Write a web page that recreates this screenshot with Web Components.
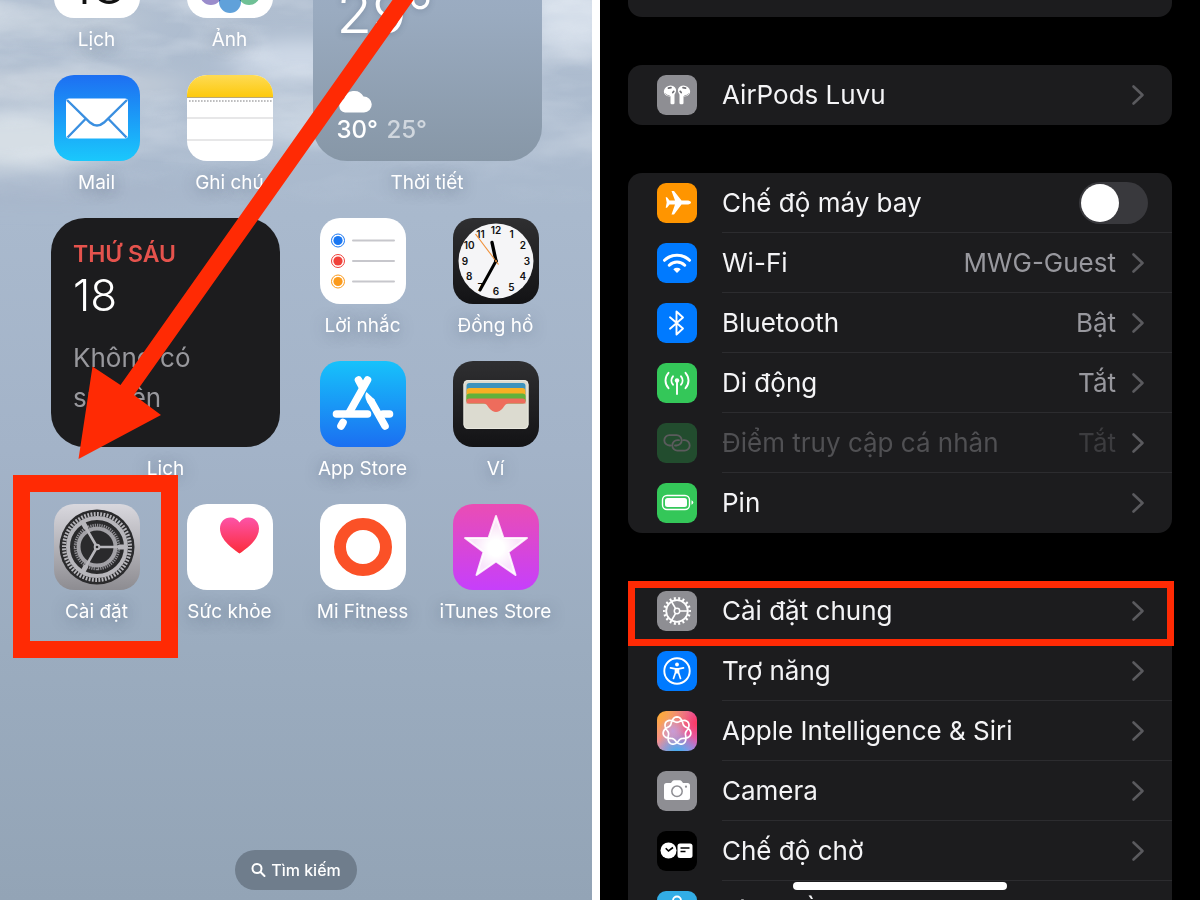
<!DOCTYPE html>
<html lang="vi">
<head>
<meta charset="utf-8">
<meta name="viewport" content="width=device-width, initial-scale=1">
<title>Cài đặt chung</title>
<style>
  body {
    margin: 0;
    background: #fff;
    font-family: Inter, 'Noto Sans', sans-serif;
  }
</style>
</head>
<body>
<guide-page></guide-page>

<script>
/* ---------- home screen artwork, 86 x 86 ---------- */

const petals = ['#f29a38', '#f6d34a', '#a9cf5c', '#5fb98a', '#4f97d6', '#8f7fc6', '#c77fb6', '#ec6a5c']
  .map((c, i) => `<rect x="32" y="5" width="22" height="36" rx="11" fill="${c}" opacity=".9" transform="rotate(${i * 45} 43 43)" style="mix-blend-mode:multiply"/>`)
  .join('');

const clockDigits = [12, 1, 2, 3, 4, 5, 6, 7, 8, 9, 10, 11].map((n, i) => {
  const a = i * Math.PI / 6;
  const x = (43 + 31 * Math.sin(a)).toFixed(1);
  const y = (46.7 - 30.5 * Math.cos(a)).toFixed(1);
  return `<text x="${x}" y="${y}">${n}</text>`;
}).join('');

const APP_ART = {
  calendar: `
    <rect width="86" height="86" fill="#fff"/>
    <text x="44" y="72" text-anchor="middle" font-size="56" font-weight="300" fill="#111">18</text>`,
  photos: `<rect width="86" height="86" fill="#fff"/>${petals}`,
  mail: `
    <defs><linearGradient id="g" x2="0" y2="1"><stop stop-color="#1d6ff2"/><stop offset="1" stop-color="#1ac8fc"/></linearGradient></defs>
    <rect width="86" height="86" fill="url(#g)"/>
    <rect x="12" y="23.500" width="62" height="40" rx="3" fill="#fff"/>
    <path d="M13 25 36 47.500q7 6 14 0L73 25M13.500 62.500 31.500 44M72.500 62.500 54.500 44" fill="none" stroke="#3a8fe0" stroke-width="2.400"/>`,
  notes: `
    <defs><linearGradient id="g" x2="0" y2="1"><stop stop-color="#fedb55"/><stop offset="1" stop-color="#fdc90c"/></linearGradient></defs>
    <rect width="86" height="86" fill="#fff"/>
    <rect width="86" height="22" fill="url(#g)"/>
    <path d="M0 22.500H86" stroke="#b9a878"/>
    <path d="M2 26H86" stroke="#a9a9ab" stroke-width="1.600" stroke-dasharray="1.600 1.400"/>
    <path d="M0 43H86M0 65H86" stroke="#cfcfd1"/>`,
  reminders: `
    <rect width="86" height="86" fill="#fff"/>
    <path d="M33 22.500H74M33 43H74M33 63.500H74" stroke="#c7c7cc" stroke-width="2" stroke-linecap="round"/>
    <g fill="#1a77f2"><circle cx="18" cy="22.500" r="4.600"/><circle cx="18" cy="22.500" r="6.500" fill="none" stroke="#1a77f2"/></g>
    <g fill="#f0413a"><circle cx="18" cy="43" r="4.600"/><circle cx="18" cy="43" r="6.500" fill="none" stroke="#f0413a"/></g>
    <g fill="#fb9a1c"><circle cx="18" cy="63.500" r="4.600"/><circle cx="18" cy="63.500" r="6.500" fill="none" stroke="#fb9a1c"/></g>`,
  clock: `
    <defs><linearGradient id="g" x2="0" y2="1"><stop stop-color="#2f2f31"/><stop offset="1" stop-color="#131315"/></linearGradient></defs>
    <rect width="86" height="86" fill="url(#g)"/>
    <circle cx="43" cy="43" r="37.500" fill="#f5f5f7"/>
    <g font-size="10" font-weight="600" fill="#111" text-anchor="middle">${clockDigits}</g>
    <g stroke="#000" stroke-linecap="round">
      <path d="M43 43 39 24.500" stroke-width="3.400"/>
      <path d="M43 43 27 72" stroke-width="3"/>
    </g>
    <path d="M45.500 46.500 22.500 16" stroke="#f0913a" stroke-width="1.200"/>
    <circle cx="43" cy="43" r="1.800" fill="#111"/><circle cx="43" cy="43" r="1" fill="#f0913a"/>`,
  appstore: `
    <defs><linearGradient id="g" x2="0" y2="1"><stop stop-color="#17c2fb"/><stop offset="1" stop-color="#1b6ff1"/></linearGradient></defs>
    <rect width="86" height="86" fill="url(#g)"/>
    <g fill="none" stroke="#fff" stroke-width="7.600" stroke-linecap="round">
      <path d="M38.500 19 42 25.500"/>
      <path d="M47.500 19 29 52"/>
      <path d="M16.500 53H47.500M63 53H69.500"/>
      <path d="M23 61.500 21 65"/>
      <path d="M51.500 41 65 65"/>
    </g>
    <path d="M46.500 31C44 35 46 39 48.200 43L55 39z" fill="#fff"/>`,
  wallet: `
    <defs><linearGradient id="g" x2="0" y2="1"><stop stop-color="#2f2f31"/><stop offset="1" stop-color="#131315"/></linearGradient></defs>
    <rect width="86" height="86" fill="url(#g)"/>
    <rect x="10.500" y="19" width="65" height="49" rx="4.500" fill="#dcdbd0"/>
    <rect x="13.500" y="22" width="59" height="20" rx="3" fill="#3c93bd"/>
    <rect x="13.500" y="27" width="59" height="15" rx="3" fill="#f7b024"/>
    <rect x="13.500" y="32.500" width="59" height="10" rx="3" fill="#62b13c"/>
    <path d="M13.500 42.500V40q0-2.500 3-2.500h53q3 0 3 2.500v2.500H57c-5 0-5 2-7 4.500q-7 8-14 0c-2-2.500-2-4.500-7-4.500z" fill="#ee6c5c"/>
    <rect x="11" y="19.500" width="64" height="48" rx="4" fill="none" stroke="#e9e8df"/>`,
  settings: `
    <defs><linearGradient id="g" x2="0" y2="1"><stop stop-color="#d9d8de"/><stop offset="1" stop-color="#8d8c91"/></linearGradient></defs>
    <rect width="86" height="86" fill="url(#g)"/>
    <circle cx="43" cy="43" r="37.500" fill="#2a2a2c"/>
    <g fill="none" stroke="#b7b6bb">
      <circle cx="43" cy="43" r="33" stroke-width="4" pathLength="128" stroke-dasharray="1.100 .9"/>
      <circle cx="43" cy="43" r="29" stroke-width="4"/>
      <circle cx="43" cy="43" r="21.800" stroke-width="3" pathLength="120" stroke-dasharray="1.100 .9" stroke="#8f8e93"/>
      <circle cx="43" cy="43" r="18.500" stroke-width="4" stroke="#a2a1a6"/>
      <path d="M43 43H70M43 43 29.500 19.600M43 43 29.500 66.400" stroke-width="2.600"/>
      <path d="M66 43H71M31.500 23 29 18.700M31.500 63 29 67.300" stroke-width="5" stroke-linecap="round"/>
    </g>
    <circle cx="43" cy="43" r="3.300" fill="#b7b6bb"/><circle cx="43" cy="43" r="1.300" fill="#2a2a2c"/>`,
  health: `
    <defs><linearGradient id="g" x2="0" y2="1"><stop stop-color="#fd53a8"/><stop offset="1" stop-color="#fb2c3a"/></linearGradient></defs>
    <rect width="86" height="86" fill="#fff"/>
    <path d="M52.500 49.500C47 45.500 33 36.500 33 24.500 33 18 37.500 13.500 43.500 13.500c4 0 7.300 2 9 5 1.700-3 5-5 9-5C67.500 13.500 72 18 72 24.500c0 12-14 21-19.500 25z" fill="url(#g)"/>`,
  fitness: `
    <rect width="86" height="86" fill="#fff"/>
    <circle cx="43" cy="43" r="23" fill="none" stroke="#fb5127" stroke-width="12"/>`,
  itunes: `
    <defs>
      <linearGradient id="g" x2="0" y2="1"><stop stop-color="#ea4db4"/><stop offset="1" stop-color="#c63ffb"/></linearGradient>
      <radialGradient id="s" gradientUnits="userSpaceOnUse" cx="43" cy="44" r="32"><stop offset=".25" stop-color="#fff"/><stop offset=".7" stop-color="#fff" stop-opacity=".86"/><stop offset="1" stop-color="#fff" stop-opacity=".92"/></radialGradient>
    </defs>
    <rect width="86" height="86" fill="url(#g)"/>
    <path d="M43 12 50.500 34H74L55.500 48 62.500 71 43 57.500 23.500 71 30.500 48 12 34H35.500z" fill="url(#s)"/>
    <path d="M43 12 50.500 34H74L55.500 48 62.500 71 43 57.500 23.500 71 30.500 48 12 34H35.500z" fill="none" stroke="#fff" stroke-opacity=".85" stroke-width="2" stroke-linejoin="round"/>`
};

/* ---------- settings glyphs, 40 x 40 ---------- */

// seven interlaced lobes, drawn as one closed curve over two turns
const knot = 'M' + Array.from({ length: 145 }, (_, i) => {
  const t = i * Math.PI / 36;
  const r = 11.4 + 2.7 * Math.cos(3.5 * t);
  return (20 + r * Math.sin(t)).toFixed(2) + ' ' + (20 - r * Math.cos(t)).toFixed(2);
}).join('L') + 'z';

const ROW_ART = {
  airpods: { bg: '#8e8e93', svg: `
    <g fill="#fff">
      <ellipse cx="13" cy="16" rx="6.200" ry="5.300" transform="rotate(-18 13 16)"/>
      <ellipse cx="27" cy="16" rx="6.200" ry="5.300" transform="rotate(18 27 16)"/>
      <path d="M13.500 19H17.500V28q0 1.300-1.300 1.300h-1.400q-1.300 0-1.300-1.300zM22.500 19H26.500V28q0 1.300-1.300 1.300h-1.400q-1.300 0-1.300-1.300z"/>
    </g>
    <path d="M11.500 13.200 14 12.600M28.500 13.200 26 12.600M15.800 17.500l1-1.200M24.200 17.500l-1-1.200" stroke="#6c6c71" stroke-width="1.700" stroke-linecap="round"/>
    <path d="M8.200 18.500q1.500 2.300 4.500 2.200M31.800 18.500q-1.500 2.300-4.500 2.200" fill="none" stroke="#8e8e93" stroke-width=".8"/>` },
  plane: { bg: '#ff9500', svg: `
    <path d="M34 19.500c0 1.500-2.500 2-4 2h-5.500l-7.500 10h-2.500l3.500-10h-5.500l-2.500 3.300H8.700l1-5.300-1-5.300H10l2.500 3.300H18L14.500 8H17l7.500 9.500H30c1.500 0 4 .5 4 2z" fill="#fff"/>` },
  wifi: { bg: '#007aff', svg: `
    <path d="M7.500 17.300a17.800 17.800 0 0 1 25 0M12.300 22.200a11 11 0 0 1 15.400 0" fill="none" stroke="#fff" stroke-width="3" stroke-linecap="round"/>
    <path d="M16.300 26.200a5.500 5.500 0 0 1 7.400 0L20 30z" fill="#fff"/>` },
  bluetooth: { bg: '#007aff', svg: `
    <path d="M13 14.300 26 25.500 19.500 31.500V8.500L26 14.500 13 25.700" fill="none" stroke="#fff" stroke-width="1.900" stroke-linejoin="round" stroke-linecap="round"/>` },
  cellular: { bg: '#34c759', svg: `
    <circle cx="20" cy="17.500" r="2.200" fill="#fff"/>
    <path d="M20 18V31M16 13.300a6.500 6.500 0 0 0 0 8.400M24 13.300a6.500 6.500 0 0 1 0 8.400M11.500 9.800c-4 4.500-4 11 0 15.400M28.500 9.800c4 4.500 4 11 0 15.400" fill="none" stroke="#fff" stroke-width="1.900" stroke-linecap="round"/>` },
  hotspot: { bg: '#34c759', svg: `
    <path d="M13.500 22.500H12.500a5.200 5.200 0 0 1 0-10.400H19.500a5.200 5.200 0 0 1 0 10.400H18M26.500 17.200H27.500a5.200 5.200 0 0 1 0 10.400H20.500a5.200 5.200 0 0 1 0-10.400H22" fill="none" stroke="#fff" stroke-width="1.800" stroke-linecap="round"/>` },
  battery: { bg: '#34c759', svg: `
    <rect x="5.500" y="12.500" width="27" height="14" rx="4.500" fill="none" stroke="#fff" stroke-width="1.400"/>
    <rect x="8" y="15" width="22" height="9" rx="2.500" fill="#fff"/>
    <path d="M34.500 17.200q1.800.8 1.800 2.300t-1.800 2.300z" fill="#fff"/>` },
  gear: { bg: '#8e8e93', svg: `
    <g fill="none" stroke="#fff">
      <circle cx="20" cy="20" r="10.800" stroke-width="1.800"/>
      <circle cx="20" cy="20" r="12.700" stroke-width="2.600" pathLength="36" stroke-dasharray=".9 1.100" stroke-dashoffset=".45"/>
      <circle cx="20" cy="20" r="2.700" stroke-width="1.500"/>
      <path d="M22.800 20H31M18.600 17.600 14.500 10.500M18.600 22.400 14.500 29.500" stroke-width="1.600"/>
    </g>` },
  access: { bg: '#007aff', svg: `
    <circle cx="20" cy="20" r="12.700" fill="none" stroke="#fff" stroke-width="1.900"/>
    <circle cx="20" cy="13.500" r="1.900" fill="#fff"/>
    <path d="M13.500 16.800 18.500 17.800V21.500L16.500 27.500M26.500 16.800 21.500 17.800V21.500L23.500 27.500" fill="none" stroke="#fff" stroke-width="1.700" stroke-linecap="round" stroke-linejoin="round"/>
    <path d="M18 17h4v5.500h-4z" fill="#fff"/>` },
  siri: { bg: 'radial-gradient(circle at 40% 50%, #c59bd8 0, #c59bd800 45%), radial-gradient(circle at 50% 110%, #2db4f5 0, #2db4f500 50%), radial-gradient(circle at 0 0, #ffae2b 0, #ffae2b00 65%), radial-gradient(circle at 100% 30%, #ff3860 0, #ff386000 60%), linear-gradient(90deg, #f58aa0, #c77be8)', svg: `
    <path d="${knot}" fill="none" stroke="#fff" stroke-width="1.700"/>` },
  camera: { bg: '#8e8e93', svg: `
    <path d="M9.500 12h4.500l1.500-2q.6-.8 1.600-.8h5.800q1 0 1.600.8l1.500 2h4.500q2.500 0 2.500 2.500v12q0 2.500-2.500 2.500h-21Q7 29 7 26.500v-12Q7 12 9.500 12z" fill="#fff"/>
    <circle cx="20" cy="20.300" r="5.200" fill="none" stroke="#8e8e93" stroke-width="1.500"/>
    <circle cx="29" cy="15.700" r="1.100" fill="#8e8e93"/>` },
  standby: { bg: '#000', svg: `
    <circle cx="11.500" cy="19.500" r="8" fill="#fff"/>
    <path d="M8.700 17.200 11.500 20 16 16.500" fill="none" stroke="#000" stroke-width="1.600"/>
    <rect x="20.500" y="12.500" width="15" height="14.500" rx="2.500" fill="#fff"/>
    <path d="M23.500 17h9M23.500 20.500h5" stroke="#000" stroke-width="1.600"/>` },
  wallpaper: { bg: '#32ade6', svg: `
    <g fill="none" stroke="#fff" stroke-width="1.800">
      <circle cx="20" cy="9.500" r="4"/><circle cx="28" cy="15" r="4"/><circle cx="12" cy="15" r="4"/>
      <circle cx="25" cy="25" r="4"/><circle cx="15" cy="25" r="4"/>
    </g>` }
};

/* ---------- elements ---------- */

class AppIcon extends HTMLElement {
  connectedCallback() {
    const label = this.getAttribute('label');
    this.attachShadow({ mode: 'open' }).innerHTML = `
      <style>
        :host { display: block; position: relative; }
        a {
          display: flex;
          flex-direction: column;
          align-items: center;
          gap: 11px;
          color: #fff;
          text-decoration: none;
        }
        svg { display: block; width: 86px; height: 86px; border-radius: 20px; }
        span {
          font-size: 19px;
          line-height: 22px;
          white-space: nowrap;
          text-shadow: 0 2px 14px rgba(60, 75, 100, .5);
        }
        :host([marked])::after {
          content: '';
          position: absolute;
          inset: -29px -15px -35px -17px;
          border: 17px solid #ff2a04;
        }
      </style>
      <a href="#${this.getAttribute('art')}">
        <svg viewBox="0 0 86 86" aria-hidden="true">${APP_ART[this.getAttribute('art')]}</svg>
        <span>${label}</span>
      </a>`;
  }
}
customElements.define('app-icon', AppIcon);

class HomeWidget extends HTMLElement {
  connectedCallback() {
    this.attachShadow({ mode: 'open' }).innerHTML = `
      <style>
        :host {
          display: flex;
          flex-direction: column;
          align-items: center;
          gap: 11px;
          grid-column: span 2;
          grid-row: span 2;
        }
        .card {
          box-sizing: border-box;
          display: flex;
          flex-direction: column;
          width: 229px;
          height: 229px;
          padding: 22px;
          border-radius: 34px;
          background: var(--card-bg, #1c1c1e);
        }
        .label {
          color: #fff;
          font-size: 19px;
          line-height: 22px;
          text-shadow: 0 2px 14px rgba(60, 75, 100, .5);
        }
      </style>
      <div class="card"><slot></slot></div>
      <div class="label">${this.getAttribute('label')}</div>`;
  }
}
customElements.define('home-widget', HomeWidget);

class SkyWallpaper extends HTMLElement {
  connectedCallback() {
    this.attachShadow({ mode: 'open' }).innerHTML = `
      <style>
        :host {
          display: block;
          position: absolute;
          inset: 0;
          background: linear-gradient(#b0bed0, #a9b9cd 24%, #a3b3c8 50%, #9bacbf 72%, #93a4b6);
        }
        svg { display: block; width: 100%; height: 260px; }
      </style>
      <svg viewBox="0 0 592 260" preserveAspectRatio="none" aria-hidden="true">
        <defs>
          <filter id="soft" x="-50%" y="-50%" width="200%" height="200%"><feGaussianBlur stdDeviation="16 9"/></filter>
          <filter id="wisps" x="0" y="0" width="100%" height="100%">
            <feTurbulence type="fractalNoise" baseFrequency=".008 .025" numOctaves="4" seed="21"/>
            <feColorMatrix values="0 0 0 0 .88  0 0 0 0 .92  0 0 0 0 .96  2.6 0 0 0 -1"/>
          </filter>
          <linearGradient id="fade" x2="0" y2="1"><stop stop-color="#fff"/><stop offset=".5" stop-color="#bbb"/><stop offset=".8" stop-color="#000"/></linearGradient>
          <mask id="m"><rect width="592" height="260" fill="url(#fade)"/></mask>
        </defs>
        <g filter="url(#soft)">
          <ellipse cx="10" cy="140" rx="100" ry="28" fill="#d6dee5"/>
          <ellipse cx="60" cy="85" rx="130" ry="14" fill="#c2ccd8"/>
          <ellipse cx="30" cy="20" rx="120" ry="14" fill="#bcc8d6"/>
          <ellipse cx="300" cy="60" rx="70" ry="20" fill="#cdd8e6"/>
          <ellipse cx="290" cy="130" rx="80" ry="14" fill="#c1cedd"/>
          <ellipse cx="575" cy="20" rx="50" ry="34" fill="#d0dae7"/>
          <ellipse cx="40" cy="192" rx="180" ry="12" fill="#a7b6ca"/>
        </g>
        <g mask="url(#m)" opacity=".4"><rect width="592" height="260" filter="url(#wisps)"/></g>
      </svg>`;
  }
}
customElements.define('sky-wallpaper', SkyWallpaper);

class HomeScreen extends HTMLElement {
  connectedCallback() {
    this.attachShadow({ mode: 'open' }).innerHTML = `
      <style>
        :host {
          display: flex;
          flex-direction: column;
          position: relative;
          min-width: 0;
          overflow: hidden;
        }
        /* scrolled so that the first row is cut by the top edge */
        .apps {
          position: relative;
          display: grid;
          grid-template-columns: repeat(4, 1fr);
          grid-auto-rows: 119px;
          row-gap: 24px;
          margin-top: -68px;
          padding: 0 30px;
        }
        /* widgets line up with the outer edges of the icons beside them */
        .weather { --card-bg: linear-gradient(#9fb0c8, #9aabc0 35%, #8797a7); padding-right: 4px; }
        .agenda { padding-left: 5px; }
        .temp { color: #fff; font-size: 58px; font-weight: 300; line-height: 60px; margin-top: 28px; text-shadow: 0 1px 6px rgba(50, 65, 90, .3); }
        .cloud { width: 36px; height: 25px; margin-top: auto; }
        .range { color: #fff; font-size: 24px; font-weight: 500; line-height: 28px; margin-top: 3px; margin-bottom: -5px; }
        .range span { color: #fff9; margin-left: 2px; }
        .temp, .cloud, .range { margin-left: 2px; }
        .weekday { color: #e5534d; font-size: 23px; font-weight: 600; line-height: 28px; }
        .day { color: #fff; font-size: 44px; font-weight: 300; line-height: 54px; }
        .events { color: #98989d; font-size: 26px; line-height: 40px; margin: 16px 0 0; max-width: 150px; }
        button {
          position: relative;
          display: flex;
          align-items: center;
          gap: 5px;
          height: 40px;
          margin: auto auto 10px;
          padding: 0 16px;
          border: 0;
          border-radius: 20px;
          background: #6f7d8c;
          color: #fff;
          font: 500 16px/20px Inter, sans-serif;
        }
        .arrow { position: absolute; top: 0; left: 0; width: 430px; height: 470px; pointer-events: none; }
      </style>
      <sky-wallpaper></sky-wallpaper>
      <div class="apps">
        <app-icon art="calendar" label="Lịch"></app-icon>
        <app-icon art="photos" label="Ảnh"></app-icon>
        <home-widget class="weather" label="Thời tiết">
          <div class="temp">29°</div>
          <svg class="cloud" viewBox="0 0 36 25" aria-hidden="true"><path d="M8 24.500A7 7 0 0 1 7 11 10.500 10.500 0 0 1 26.500 8.500 8 8 0 0 1 27 24.500z" fill="#fff"/></svg>
          <div class="range">30° <span>25°</span></div>
        </home-widget>
        <app-icon art="mail" label="Mail"></app-icon>
        <app-icon art="notes" label="Ghi chú"></app-icon>
        <home-widget class="agenda" label="Lịch">
          <div class="weekday">THỨ SÁU</div>
          <div class="day">18</div>
          <p class="events">Không có sự kiện</p>
        </home-widget>
        <app-icon art="reminders" label="Lời nhắc"></app-icon>
        <app-icon art="clock" label="Đồng hồ"></app-icon>
        <app-icon art="appstore" label="App Store"></app-icon>
        <app-icon art="wallet" label="Ví"></app-icon>
        <app-icon art="settings" label="Cài đặt" marked></app-icon>
        <app-icon art="health" label="Sức khỏe"></app-icon>
        <app-icon art="fitness" label="Mi Fitness"></app-icon>
        <app-icon art="itunes" label="iTunes Store"></app-icon>
      </div>
      <button type="button">
        <svg width="15" height="16" viewBox="0 0 15 16" fill="none" stroke="#fff" stroke-width="2" stroke-linecap="round" aria-hidden="true"><circle cx="6" cy="6.500" r="4.500"/><path d="M9.500 10 13.500 14"/></svg>
        Tìm kiếm
      </button>
      <svg class="arrow" viewBox="0 0 430 470" aria-hidden="true"><path d="M392.500 0H413.500L134 395 161 415 78.500 459 92.500 366.500 120.500 385z" fill="#ff2a04"/></svg>`;
  }
}
customElements.define('home-screen', HomeScreen);

class SettingsGroup extends HTMLElement {
  connectedCallback() {
    this.attachShadow({ mode: 'open' }).innerHTML = `
      <style>
        :host { display: block; border-radius: 14px; background: #1c1c1e; }
      </style>
      <slot></slot>`;
  }
}
customElements.define('settings-group', SettingsGroup);

class SettingsRow extends HTMLElement {
  connectedCallback() {
    const art = ROW_ART[this.getAttribute('art')];
    const isSwitch = this.hasAttribute('switch');
    const tag = isSwitch ? 'label' : 'a';
    const end = isSwitch
      ? '<input type="checkbox" role="switch">'
      : `<span class="value">${this.getAttribute('value') || ''}</span>
         <svg class="chevron" viewBox="0 0 20 24" aria-hidden="true"><path d="M5.500 3.500 14.500 12 5.500 20.500" fill="none" stroke="#5a5a5e" stroke-width="2.600" stroke-linecap="round" stroke-linejoin="round"/></svg>`;
    this.attachShadow({ mode: 'open' }).innerHTML = `
      <style>
        :host { display: block; position: relative; }
        .row {
          display: flex;
          align-items: center;
          gap: 25px;
          height: 60px;
          padding-left: 29px;
          color: #f4f4f6;
          text-decoration: none;
        }
        .icon {
          flex: none;
          width: 40px;
          height: 40px;
          border-radius: 9px;
          background: ${art.bg};
        }
        .icon svg { display: block; }
        .body {
          box-sizing: border-box;
          flex: 1;
          display: flex;
          align-items: center;
          gap: 12px;
          height: 100%;
          padding: 1px 24px 0 0;
          border-bottom: 1px solid #2c2c2f;
          font-size: 26px;
          line-height: 36px;
          white-space: nowrap;
        }
        :host(:last-of-type) .body, :host([marked]) .body { border-color: transparent; }
        .text { flex: 1; }
        .value { color: #98989e; }
        .chevron { width: 20px; height: 24px; }
        :host([disabled]) .icon { opacity: .28; }
        :host([disabled]) .text { color: #505053; }
        :host([disabled]) .value { color: #3c3c3f; }
        input {
          appearance: none;
          display: flex;
          box-sizing: border-box;
          width: 69px;
          height: 42px;
          margin: 0;
          padding: 2px;
          border-radius: 21px;
          background: #39393d;
        }
        input::before {
          content: '';
          width: 38px;
          height: 38px;
          border-radius: 50%;
          background: #fff;
        }
        input:checked { justify-content: flex-end; background: #34c759; }
        :host([marked]) { z-index: 1; }
        :host([marked])::after {
          content: '';
          position: absolute;
          inset: 0 -2px -5px 0;
          border: 7px solid #ff2a04;
          pointer-events: none;
        }
      </style>
      <${tag} class="row" ${isSwitch ? '' : `href="#${this.getAttribute('art')}"`}>
        <span class="icon"><svg width="40" height="40" viewBox="0 0 40 40" aria-hidden="true">${art.svg}</svg></span>
        <span class="body"><span class="text"><slot></slot></span>${end}</span>
      </${tag}>`;
  }
}
customElements.define('settings-row', SettingsRow);

class SettingsScreen extends HTMLElement {
  connectedCallback() {
    this.attachShadow({ mode: 'open' }).innerHTML = `
      <style>
        :host {
          display: block;
          position: relative;
          min-width: 0;
          overflow: hidden;
          background: #000;
        }
        /* scrolled list, the profile card ends just under the top edge */
        .list {
          display: flex;
          flex-direction: column;
          gap: 48px;
          margin-top: -43px;
          padding: 0 28px;
        }
        .profile { height: 60px; }
        .indicator {
          position: absolute;
          bottom: 10px;
          left: 50%;
          width: 214px;
          height: 8px;
          margin-left: -107px;
          border-radius: 4px;
          background: #fff;
          z-index: 2;
        }
      </style>
      <div class="list">
        <settings-group class="profile"></settings-group>
        <settings-group>
          <settings-row art="airpods">AirPods Luvu</settings-row>
        </settings-group>
        <settings-group>
          <settings-row art="plane" switch>Chế độ máy bay</settings-row>
          <settings-row art="wifi" value="MWG-Guest">Wi-Fi</settings-row>
          <settings-row art="bluetooth" value="Bật">Bluetooth</settings-row>
          <settings-row art="cellular" value="Tắt">Di động</settings-row>
          <settings-row art="hotspot" value="Tắt" disabled>Điểm truy cập cá nhân</settings-row>
          <settings-row art="battery">Pin</settings-row>
        </settings-group>
        <settings-group>
          <settings-row art="gear" marked>Cài đặt chung</settings-row>
          <settings-row art="access">Trợ năng</settings-row>
          <settings-row art="siri">Apple Intelligence &amp; Siri</settings-row>
          <settings-row art="camera">Camera</settings-row>
          <settings-row art="standby">Chế độ chờ</settings-row>
          <settings-row art="wallpaper">Hình nền</settings-row>
        </settings-group>
      </div>
      <div class="indicator"></div>`;
  }
}
customElements.define('settings-screen', SettingsScreen);

class GuidePage extends HTMLElement {
  connectedCallback() {
    this.attachShadow({ mode: 'open' }).innerHTML = `
      <style>
        :host {
          display: grid;
          grid-template-columns: 74fr 75fr;
          grid-template-rows: 100vh;
          gap: 8px;
        }
      </style>
      <home-screen></home-screen>
      <settings-screen></settings-screen>`;
  }
}
customElements.define('guide-page', GuidePage);
</script>
</body>
</html>
